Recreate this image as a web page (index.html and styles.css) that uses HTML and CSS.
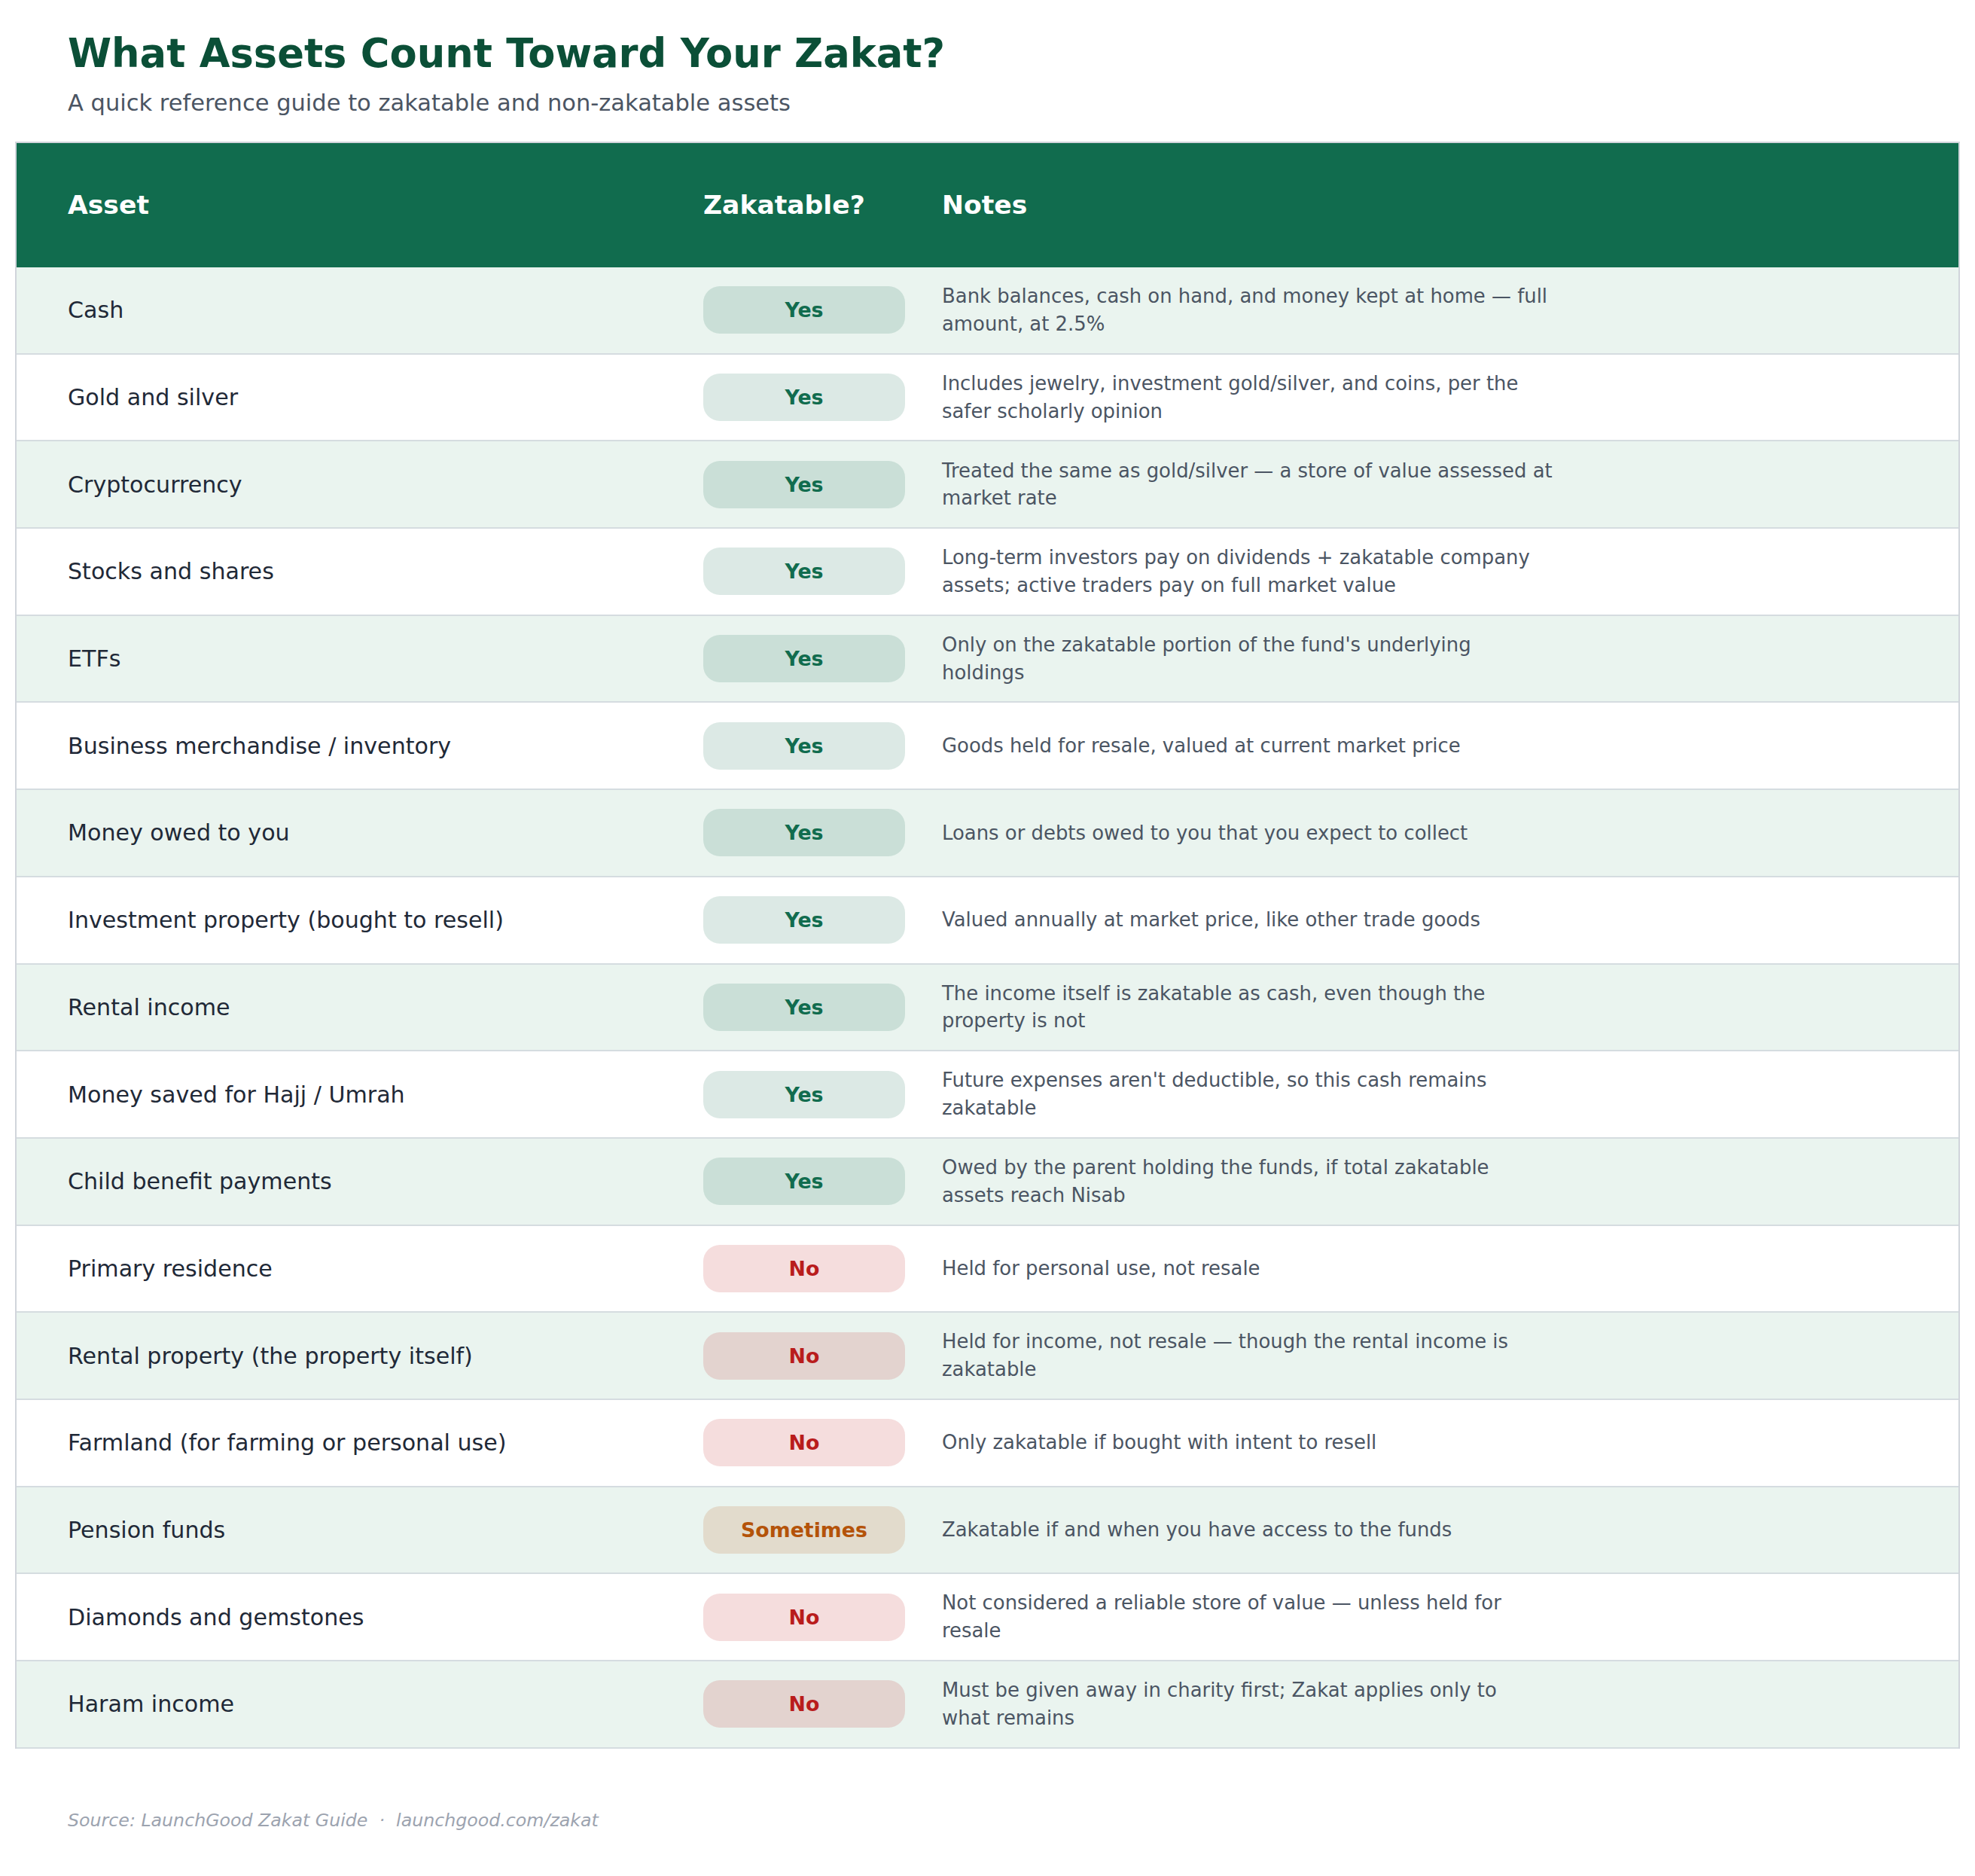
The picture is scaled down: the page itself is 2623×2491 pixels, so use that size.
FILE: index.html
```html
<!DOCTYPE html>
<html lang="en">
<head>
<meta charset="utf-8">
<title>What Assets Count Toward Your Zakat?</title>
<link rel="stylesheet" href="styles.css">
</head>
<body>
<div class="page">
  <header class="intro">
    <h1 class="title">What Assets Count Toward Your Zakat?</h1>
    <p class="subtitle">A quick reference guide to zakatable and non-zakatable assets</p>
  </header>

  <div class="table">
    <div class="row head">
      <div class="cell c-asset">Asset</div>
      <div class="cell c-zak">Zakatable?</div>
      <div class="cell c-notes">Notes</div>
    </div>

    <div class="row">
      <div class="cell c-asset">Cash</div>
      <div class="cell c-zak"><span class="pill yes">Yes</span></div>
      <div class="cell c-notes"><p class="note">Bank balances, cash on hand, and money kept at home — full amount, at 2.5%</p></div>
    </div>
    <div class="row">
      <div class="cell c-asset">Gold and silver</div>
      <div class="cell c-zak"><span class="pill yes">Yes</span></div>
      <div class="cell c-notes"><p class="note">Includes jewelry, investment gold/silver, and coins, per the safer scholarly opinion</p></div>
    </div>
    <div class="row">
      <div class="cell c-asset">Cryptocurrency</div>
      <div class="cell c-zak"><span class="pill yes">Yes</span></div>
      <div class="cell c-notes"><p class="note">Treated the same as gold/silver — a store of value assessed at market rate</p></div>
    </div>
    <div class="row">
      <div class="cell c-asset">Stocks and shares</div>
      <div class="cell c-zak"><span class="pill yes">Yes</span></div>
      <div class="cell c-notes"><p class="note">Long-term investors pay on dividends + zakatable company assets; active traders pay on full market value</p></div>
    </div>
    <div class="row">
      <div class="cell c-asset">ETFs</div>
      <div class="cell c-zak"><span class="pill yes">Yes</span></div>
      <div class="cell c-notes"><p class="note">Only on the zakatable portion of the fund's underlying holdings</p></div>
    </div>
    <div class="row">
      <div class="cell c-asset">Business merchandise / inventory</div>
      <div class="cell c-zak"><span class="pill yes">Yes</span></div>
      <div class="cell c-notes"><p class="note">Goods held for resale, valued at current market price</p></div>
    </div>
    <div class="row">
      <div class="cell c-asset">Money owed to you</div>
      <div class="cell c-zak"><span class="pill yes">Yes</span></div>
      <div class="cell c-notes"><p class="note">Loans or debts owed to you that you expect to collect</p></div>
    </div>
    <div class="row">
      <div class="cell c-asset">Investment property (bought to resell)</div>
      <div class="cell c-zak"><span class="pill yes">Yes</span></div>
      <div class="cell c-notes"><p class="note">Valued annually at market price, like other trade goods</p></div>
    </div>
    <div class="row">
      <div class="cell c-asset">Rental income</div>
      <div class="cell c-zak"><span class="pill yes">Yes</span></div>
      <div class="cell c-notes"><p class="note">The income itself is zakatable as cash, even though the property is not</p></div>
    </div>
    <div class="row">
      <div class="cell c-asset">Money saved for Hajj / Umrah</div>
      <div class="cell c-zak"><span class="pill yes">Yes</span></div>
      <div class="cell c-notes"><p class="note">Future expenses aren't deductible, so this cash remains zakatable</p></div>
    </div>
    <div class="row">
      <div class="cell c-asset">Child benefit payments</div>
      <div class="cell c-zak"><span class="pill yes">Yes</span></div>
      <div class="cell c-notes"><p class="note">Owed by the parent holding the funds, if total zakatable assets reach Nisab</p></div>
    </div>
    <div class="row">
      <div class="cell c-asset">Primary residence</div>
      <div class="cell c-zak"><span class="pill no">No</span></div>
      <div class="cell c-notes"><p class="note">Held for personal use, not resale</p></div>
    </div>
    <div class="row">
      <div class="cell c-asset">Rental property (the property itself)</div>
      <div class="cell c-zak"><span class="pill no">No</span></div>
      <div class="cell c-notes"><p class="note">Held for income, not resale — though the rental income is zakatable</p></div>
    </div>
    <div class="row">
      <div class="cell c-asset">Farmland (for farming or personal use)</div>
      <div class="cell c-zak"><span class="pill no">No</span></div>
      <div class="cell c-notes"><p class="note">Only zakatable if bought with intent to resell</p></div>
    </div>
    <div class="row">
      <div class="cell c-asset">Pension funds</div>
      <div class="cell c-zak"><span class="pill some">Sometimes</span></div>
      <div class="cell c-notes"><p class="note">Zakatable if and when you have access to the funds</p></div>
    </div>
    <div class="row">
      <div class="cell c-asset">Diamonds and gemstones</div>
      <div class="cell c-zak"><span class="pill no">No</span></div>
      <div class="cell c-notes"><p class="note">Not considered a reliable store of value — unless held for resale</p></div>
    </div>
    <div class="row">
      <div class="cell c-asset">Haram income</div>
      <div class="cell c-zak"><span class="pill no">No</span></div>
      <div class="cell c-notes"><p class="note">Must be given away in charity first; Zakat applies only to what&nbsp;remains</p></div>
    </div>
  </div>

  <footer class="source">Source: LaunchGood Zakat Guide &nbsp;·&nbsp; launchgood.com/zakat</footer>
</div>
</body>
</html>
```

FILE: styles.css
```css
* { box-sizing: border-box; }

html, body {
  margin: 0;
  padding: 0;
  background: #ffffff;
}

body {
  font-family: "DejaVu Sans", "Liberation Sans", sans-serif;
  color: #1f2937;
}

.page {
  padding: 40px 20px 60px;
}

.intro {
  padding-left: 70px;
}

.title {
  margin: 0;
  font-size: 52.7px;
  line-height: 62px;
  font-weight: 700;
  color: #0b4f37;
}

.subtitle {
  margin: 18px 0 0;
  font-size: 30.5px;
  line-height: 33px;
  color: #4b5563;
}

.table {
  margin-top: 35px;
  border: 2px solid #d1d5db;
  border-bottom: none;
}

.row {
  display: grid;
  grid-template-columns: 887px 317px 1fr;
  height: 115.7px;
  border-bottom: 2px solid #d5dce0;
  background: #ffffff;
}

.row:nth-child(even) {
  background: #eaf4ef;
}

.row.head {
  height: 165px;
  background: #116c4e;
  border-bottom: none;
}

.cell {
  display: flex;
  align-items: center;
}

.c-asset {
  padding-left: 68px;
  font-size: 30.1px;
  color: #1f2937;
}

.c-zak {
  padding-left: 25px;
}

.c-notes {
  padding-left: 25px;
}

.head .cell {
  font-size: 34.6px;
  font-weight: 700;
  color: #ffffff;
  padding-bottom: 2px;
}

.pill {
  display: flex;
  align-items: center;
  justify-content: center;
  width: 268px;
  height: 63px;
  border-radius: 22px;
  font-size: 26.8px;
  font-weight: 700;
}

.pill.yes {
  background: rgba(17, 108, 78, 0.15);
  color: #116c4e;
}

.pill.no {
  background: rgba(185, 28, 28, 0.15);
  color: #b91c1c;
}

.pill.some {
  background: rgba(180, 83, 9, 0.15);
  color: #b45309;
}

.note {
  margin: 0;
  max-width: 812px;
  font-size: 25.9px;
  line-height: 36.7px;
  color: #4b5563;
}

.source {
  margin-top: 82px;
  padding-left: 70px;
  font-size: 23.7px;
  line-height: 27px;
  font-style: italic;
  color: #9ca3af;
}
```
